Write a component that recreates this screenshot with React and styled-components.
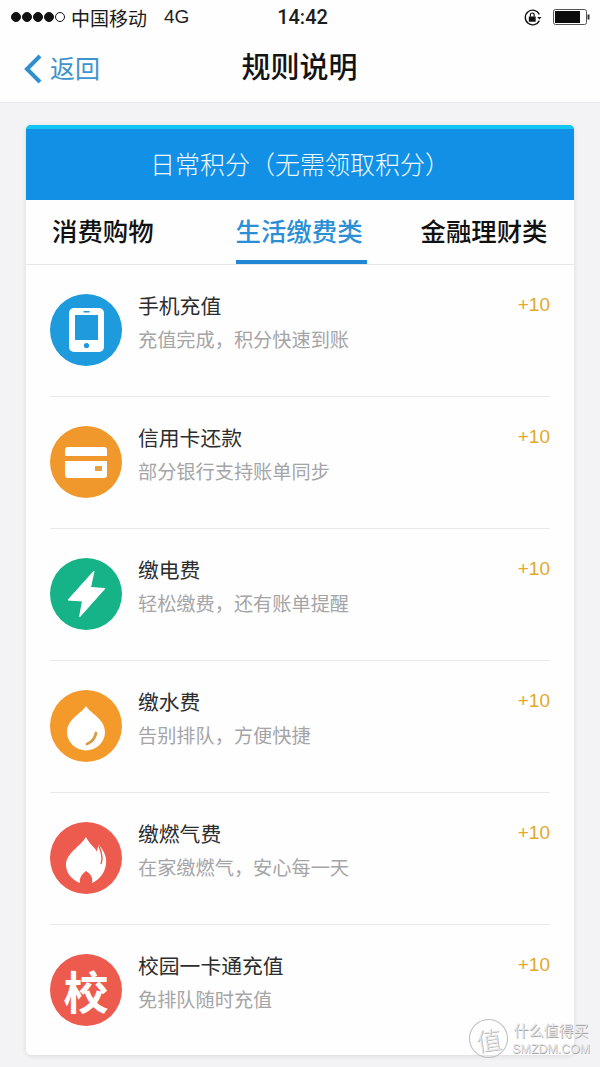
import React from 'react';
import styled, { createGlobalStyle } from 'styled-components';

const GlobalStyle = createGlobalStyle`
  html, body {
    margin: 0;
    padding: 0;
    background: #f3f3f6;
    font-family: "Liberation Sans", "Noto Sans CJK SC", sans-serif;
  }
`;

const Page = styled.div`
  position: relative;
  width: 600px;
  height: 1067px;
  overflow: hidden;
  background: #f3f3f6;
`;

const Header = styled.header`
  height: 102px;
  background: #fefefe;
  border-bottom: 1px solid #e9e9eb;
  box-sizing: content-box;
`;

const StatusBar = styled.div`
  display: grid;
  grid-template-columns: 1fr auto 1fr;
  align-items: center;
  height: 34px;
  padding: 0 10px 0 11px;
  color: #1c1c1c;
`;

const StatusLeft = styled.div`
  display: flex;
  align-items: center;
  gap: 6px;
  font-size: 19px;
`;

const Signal = styled.div`
  display: flex;
  gap: 1px;
`;

const Dot = styled.span`
  width: 10px;
  height: 10px;
  box-sizing: border-box;
  border-radius: 50%;
  background: ${p => (p.$empty ? 'transparent' : '#111')};
  border: 1px solid #111;
`;

const Network = styled.span`
  margin-left: 11px;
`;

const Clock = styled.div`
  margin-left: 4px;
  font-family: Roboto, "Liberation Sans", sans-serif;
  font-size: 20px;
  font-weight: 500;
`;

const StatusRight = styled.div`
  display: flex;
  justify-content: flex-end;
  align-items: center;
  gap: 11px;
`;

const NavBar = styled.div`
  position: relative;
  display: flex;
  align-items: center;
  justify-content: center;
  height: 68px;
`;

const BackLink = styled.div`
  position: absolute;
  left: 23px;
  top: 20px;
  display: flex;
  align-items: center;
  gap: 7px;
  font-size: 25px;
  line-height: 28px;
  color: #3f93cc;
`;

const NavTitle = styled.h1`
  margin: 0 0 0 -1px;
  font-size: 29px;
  line-height: 34px;
  font-weight: 500;
  color: #141414;
`;

const Card = styled.section`
  width: 548px;
  height: 930px;
  margin: 22px 0 0 26px;
  background: #fefefe;
  border-radius: 5px;
  overflow: hidden;
  box-shadow: 0 1px 5px rgba(0, 0, 0, 0.1);
`;

const Banner = styled.div`
  display: flex;
  align-items: center;
  justify-content: center;
  height: 75px;
  padding-bottom: 3px;
  box-sizing: border-box;
  border-top: 4px solid #12c5f3;
  background: #1190e6;
  color: #f0f8fe;
  font-size: 25px;
  font-weight: 300;
`;

const Tabs = styled.div`
  display: flex;
  height: 64px;
  padding-left: 26px;
  border-bottom: 1px solid #e6e6e8;
  box-sizing: content-box;
`;

const Tab = styled.div`
  display: flex;
  align-items: center;
  height: 64px;
  box-sizing: border-box;
  margin-left: ${p => p.$gap || 0}px;
  padding-right: ${p => (p.$active ? '4px' : '0')};
  border-bottom: 4px solid ${p => (p.$active ? '#1f87d6' : 'transparent')};
  color: ${p => (p.$active ? '#2b8fd6' : '#111')};
  font-size: 25.4px;
  font-weight: 500;
`;

const List = styled.ul`
  margin: 0;
  padding: 0 24px;
  list-style: none;
`;

const Row = styled.li`
  display: flex;
  align-items: flex-start;
  height: 132px;
  box-sizing: border-box;
  padding-top: 29px;
  border-bottom: ${p => (p.$last ? 'none' : '1px solid #e9e9eb')};
`;

const Badge = styled.div`
  display: flex;
  align-items: center;
  justify-content: center;
  flex: none;
  width: 72px;
  height: 72px;
  border-radius: 50%;
  background: ${p => p.$color};
  color: #fff;
  font-size: 45px;
  font-weight: 700;
`;

const RowText = styled.div`
  flex: 1;
  margin-left: 16px;
`;

const RowTitle = styled.div`
  font-size: 20.8px;
  line-height: 26px;
  color: #2d2d2d;
`;

const RowSub = styled.div`
  margin-top: 8px;
  font-size: 19.2px;
  line-height: 26px;
  color: #a5a5a7;
`;

const Points = styled.div`
  margin-top: -1px;
  font-size: 19px;
  line-height: 24px;
  color: #e2a92e;
`;

const Watermark = styled.div`
  position: absolute;
  right: 10px;
  bottom: 9px;
  display: flex;
  align-items: center;
  gap: 4px;
  color: #e6e6e8;
  text-shadow: 0.6px 0.6px 0 #a9a9ab;
`;

const MarkSeal = styled.div`
  display: flex;
  align-items: center;
  justify-content: center;
  width: 39px;
  height: 39px;
  box-sizing: border-box;
  border: 1.5px solid #bcbcbe;
  border-radius: 50%;
  font-size: 25px;
  font-weight: 300;
  transform: rotate(-8deg);
`;

const MarkText = styled.div`
  display: flex;
  flex-direction: column;
  align-items: center;
  font-size: 15px;
  line-height: 20px;
`;

const MarkSub = styled.span`
  font-size: 12.4px;
  line-height: 16px;
`;

const PhoneIcon = () => (
  <svg width="35" height="44" viewBox="0 0 35 44">
    <rect width="35" height="44" rx="5" fill="#fff" />
    <rect width="23" height="25" x="6" y="7" fill="#1d9bdc" />
    <rect width="6" height="1.5" x="14.5" y="3" fill="#1d9bdc" />
    <circle cx="17.5" cy="37.5" r="2.6" fill="#1d9bdc" />
  </svg>
);

const CardIcon = () => (
  <svg width="42" height="31" viewBox="0 0 42 31">
    <path d="M3 0h36a3 3 0 0 1 3 3v6H0V3a3 3 0 0 1 3-3z" fill="#fff" />
    <path d="M0 14h42v14a3 3 0 0 1-3 3H3a3 3 0 0 1-3-3z" fill="#fff" />
    <rect width="7" height="5" x="30" y="19" fill="#e9a040" />
  </svg>
);

const BoltIcon = () => (
  <svg width="39" height="48" viewBox="0 0 39 48">
    <path d="M27 1 L1 30 L15.5 31 L12.5 47 L38 18.5 L23.5 17.5 Z" fill="#fff" stroke="#fff" strokeWidth="1" strokeLinejoin="round" />
  </svg>
);

const DropIcon = () => (
  <svg width="38" height="50" viewBox="0 0 38 50">
    <path d="M19 5 C23 12 38 18 38 31 A19 18.5 0 0 1 0 31 C0 18 15 12 19 5 Z" fill="#fff" />
    <path d="M29 32 C28 37 25 41 20 43" fill="none" stroke="#d99a45" strokeWidth="2.8" strokeLinecap="round" />
  </svg>
);

const FlameIcon = () => (
  <svg width="41" height="50" viewBox="0 0 41 50">
    <path d="M20 4 C24 12 29 14 31 19 C31 16 32 14 33 12 C38 18 41 24 40 31 C39 40 33 47 26 50 C27 45 25 41 20 38 C16 41 13 45 14 50 C6 47 0 40 0 32 C0 20 14 14 20 4 Z" fill="#fff" />
    <path d="M33 13 C36 20 37 26 35 31" fill="none" stroke="#ed5b4e" strokeWidth="1.4" />
  </svg>
);

const rows = [
  { title: '手机充值', sub: '充值完成，积分快速到账', color: '#1d9bdc', icon: <PhoneIcon /> },
  { title: '信用卡还款', sub: '部分银行支持账单同步', color: '#f0982b', icon: <CardIcon /> },
  { title: '缴电费', sub: '轻松缴费，还有账单提醒', color: '#17b388', icon: <BoltIcon /> },
  { title: '缴水费', sub: '告别排队，方便快捷', color: '#f39a2b', icon: <DropIcon /> },
  { title: '缴燃气费', sub: '在家缴燃气，安心每一天', color: '#ed5b4e', icon: <FlameIcon /> },
  { title: '校园一卡通充值', sub: '免排队随时充值', color: '#ed5b4e', icon: '校' },
];

const App = () => {
  return (
    <Page>
      <GlobalStyle />
      <Header>
        <StatusBar>
          <StatusLeft>
            <Signal>
              <Dot /><Dot /><Dot /><Dot /><Dot $empty />
            </Signal>
            <span>中国移动</span>
            <Network>4G</Network>
          </StatusLeft>
          <Clock>14:42</Clock>
          <StatusRight>
            <svg width="19" height="19" viewBox="0 0 18 18">
              <path d="M15.5 6A7 7 0 1 0 15.5 12" fill="none" stroke="#111" strokeWidth="1.3" />
              <path d="M13.5 8.5h4l-2 2.5z" fill="#111" />
              <rect x="5.5" y="8" width="6.5" height="5" fill="#111" />
              <path d="M7 8V6.5a1.8 1.8 0 0 1 3.6 0V8" fill="none" stroke="#111" strokeWidth="1.1" />
            </svg>
            <svg width="37" height="16" viewBox="0 0 37 16">
              <rect x="0.5" y="0.5" width="33" height="15" rx="2" fill="#fff" stroke="#555" />
              <rect x="2" y="2" width="25" height="12" fill="#0c0c0c" />
              <rect x="34.5" y="5.5" width="2" height="5" fill="#333" />
            </svg>
          </StatusRight>
        </StatusBar>
        <NavBar>
          <BackLink>
            <svg width="20" height="30" viewBox="0 0 20 30">
              <path d="M17 2 L4 15 L17 28" fill="none" stroke="#2f8fd0" strokeWidth="4" />
            </svg>
            <span>返回</span>
          </BackLink>
          <NavTitle>规则说明</NavTitle>
        </NavBar>
      </Header>
      <Card>
        <Banner>日常积分（无需领取积分）</Banner>
        <Tabs>
          <Tab>消费购物</Tab>
          <Tab $active $gap={82}>生活缴费类</Tab>
          <Tab $gap={54}>金融理财类</Tab>
        </Tabs>
        <List>
          {rows.map((row, index) => (
            <Row key={row.title} $last={index === rows.length - 1}>
              <Badge $color={row.color}>{row.icon}</Badge>
              <RowText>
                <RowTitle>{row.title}</RowTitle>
                <RowSub>{row.sub}</RowSub>
              </RowText>
              <Points>+10</Points>
            </Row>
          ))}
        </List>
      </Card>
      <Watermark>
        <MarkSeal>值</MarkSeal>
        <MarkText>
          什么值得买
          <MarkSub>SMZDM.COM</MarkSub>
        </MarkText>
      </Watermark>
    </Page>
  );
};

export default App;
